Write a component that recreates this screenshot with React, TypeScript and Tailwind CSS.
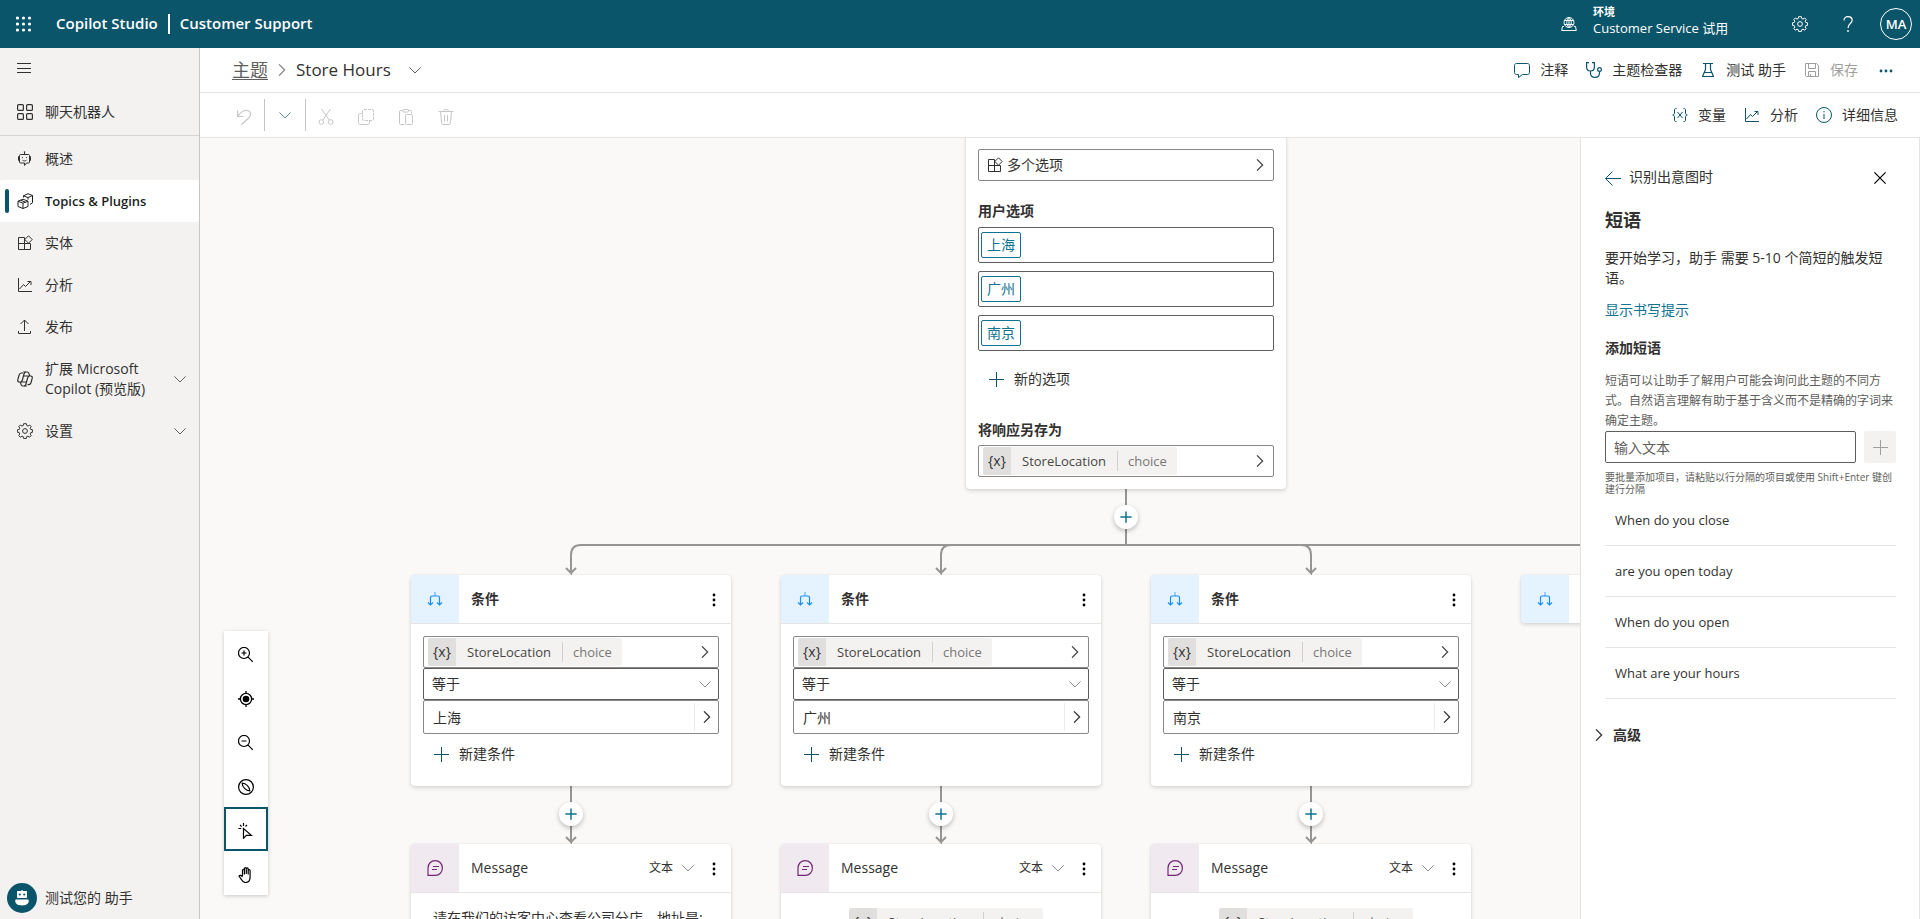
import { ReactNode } from 'react';

interface IconProps {
  className?: string;
  size?: number;
}

function Icon({ size = 16, className = '', children }: IconProps & { children: ReactNode }) {
  return (
    <svg
      width={size}
      height={size}
      viewBox="0 0 16 16"
      fill="none"
      stroke="currentColor"
      strokeWidth="1"
      className={`shrink-0 ${className}`}
      aria-hidden="true"
    >
      {children}
    </svg>
  );
}

const ChevronDown = ({ className }: IconProps) => (
  <Icon size={12} className={className}>
    <path d="M.5 4.5 8 12l7.500-7.500" strokeWidth="1.300" />
  </Icon>
);

const ChevronRight = ({ className }: IconProps) => (
  <Icon size={12} className={className}>
    <path d="M4 .5 11.500 8 4 15.500" strokeWidth="1.700" />
  </Icon>
);

const Plus = ({ className, size }: IconProps) => (
  <Icon size={size} className={className}>
    <path d="M8.500 1v15M1 8.500h15" />
  </Icon>
);

const Waffle = () => (
  <Icon>
    {[1.5, 7.5, 13.5].map((y) =>
      [1.5, 7.5, 13.5].map((x) => (
        <circle key={`${x}-${y}`} cx={x} cy={y + 0.5} r="1.600" fill="currentColor" stroke="none" />
      )),
    )}
  </Icon>
);

const Gear = () => (
  <Icon>
    <circle cx="8" cy="8" r="2.400" />
    <path
      strokeLinejoin="round"
      d="M6.600.7h2.800l.4 1.900 1.200.5L12.700 2l1.500 1.500-1 1.700.5 1.200 1.700.3v2.700l-1.700.3-.5 1.200 1 1.700-1.500 1.600-1.700-1.100-1.200.5-.4 1.800H6.600l-.4-1.800-1.200-.5-1.700 1.100-1.500-1.600 1-1.700-.5-1.200L.600 9.400V6.700l1.700-.3.5-1.200-1-1.700L3.300 2 5 3.100l1.200-.5z"
    />
  </Icon>
);

const Grid = () => (
  <Icon>
    <g strokeWidth="1.200">
      <rect x=".6" y=".6" width="5.800" height="5.800" rx="1" />
      <rect x="9.600" y=".6" width="5.800" height="5.800" rx="1" />
      <rect x=".6" y="9.600" width="5.800" height="5.800" rx="1" />
      <rect x="9.600" y="9.600" width="5.800" height="5.800" rx="1" />
    </g>
  </Icon>
);

const Bot = () => (
  <Icon>
    <path d="M7.500 1v2.500M3.500 3.500h8c.6 0 1 .4 1 1v6.500c0 .6-.4 1-1 1h-2L7.500 14.500V12h-4c-.6 0-1-.4-1-1V4.500c0-.6.400-1 1-1zM2.500 5.500H1.500v4h1M12.500 5.500h1v4h-1M5.500 9.200c1.100.9 2.900.9 4 0" />
    <circle cx="5.500" cy="6.500" r=".6" fill="currentColor" stroke="none" />
    <circle cx="9.500" cy="6.500" r=".6" fill="currentColor" stroke="none" />
    <circle cx="7.500" cy="1" r=".8" fill="currentColor" stroke="none" />
  </Icon>
);

const Topics = () => (
  <Icon>
    <path
      strokeLinejoin="round"
      d="M6 6.200 11 8.200v5.300L6 15.500l-5-2V8.200zM1 8.200l5 2 5-2M6 10.200v5.300M3.500 7.200l5 2M6.500 4.500V2.800L11 .7l4.500 1.800v7.300L13 11.500M6.500 2.800l4.500 1.800 4.500-2.100M11 4.600v2"
    />
  </Icon>
);

const Entities = ({ className }: IconProps) => (
  <Icon className={className}>
    <path d="M7.500 2.500h-6v12h12v-6M1.500 8.500h12M7.500 2.500v12M11.500.800l3.700 3.700-3.700 3.700-3.700-3.700z" />
  </Icon>
);

const Analytics = () => (
  <Icon>
    <path d="M1.500 1v13.500H15M2.500 12 6.500 7.500l2 2 5-5M10.500 4.500h3.500V8" />
  </Icon>
);

const Publish = () => (
  <Icon>
    <path d="M1.500 12v2.500h12V12M7.500 12V1M3.500 5l4-4 4 4" />
  </Icon>
);

const CopilotMark = () => (
  <Icon>
    <g strokeWidth="1.200" strokeLinejoin="round">
      <path d="M6.200 1h4.200c1 0 1.300.6 1.600 1.600l.4 1.400c.2.700.6 1 1.300 1 1.200 0 1.800.9 1.500 2.200l-1.100 4.300c-.4 1.400-1.100 2.100-2.400 2.100H10.500" />
      <path d="M9.800 15H5.600c-1 0-1.300-.6-1.600-1.600L3.600 12c-.2-.7-.6-1-1.300-1C1.100 11 .5 10.100.8 8.800l1.100-4.300C2.300 3.100 3 2 4.500 2h1.700" />
      <path d="M9 1C7.800 1 7.300 1.800 7 3L5.400 9c-.3 1.300-1 2-2.200 2M7 15c1.200 0 1.700-.8 2-2l1.600-6c.3-1.300 1-2 2.200-2M6.500 5h6M3.500 11h6" />
    </g>
  </Icon>
);

const Environment = () => (
  <Icon>
    <circle cx="8" cy="6.500" r="5" />
    <path d="M8 1.500c-3 2.500-3 7.500 0 10M8 1.500c3 2.500 3 7.500 0 10M3.500 4.500h9M3.300 8.500h9.400M8 1.500v10M3 10.500H1.500L.7 14.500h14.600l-.8-4H13" />
  </Icon>
);

const Help = () => (
  <Icon>
    <path strokeWidth="1.200" d="M4 4.500C4 2 5.600.7 8 .7s4.200 1.400 4.200 3.600c0 3.200-4.200 3.400-4.200 7.700" />
    <circle cx="8" cy="15" r=".9" fill="currentColor" stroke="none" />
  </Icon>
);

const Comment = () => (
  <Icon>
    <path strokeLinejoin="round" d="M2.500 1.500h11c1.200 0 2 .8 2 2v7c0 1.200-.8 2-2 2h-5L4.500 15.500v-3h-2c-1.200 0-2-.8-2-2v-7c0-1.200.8-2 2-2z" />
  </Icon>
);

const Stethoscope = () => (
  <Icon>
    <path strokeWidth="1.200" d="M3 .6H.6V5c0 2.500 1.500 4 3.900 4s3.900-1.500 3.900-4V.6H6M4.500 9v2c0 2.800 1.700 4.400 4.400 4.400s4.600-1.600 4.600-4.400V9.400" />
    <circle cx="13.500" cy="7.500" r="1.900" strokeWidth="1.200" />
  </Icon>
);

const Flask = () => (
  <Icon>
    <path strokeLinejoin="round" d="M3 1.500h10M5.500 1.500v6l-3 7h11l-3-7v-6M4 10.500h8" strokeWidth="1.200" />
  </Icon>
);

const Save = () => (
  <Icon>
    <path d="M1.500 1.500h11l2 2v11h-12l-1-1zM4.500 1.500v5h7v-5M4.500 14.500v-5h7v5M6.500 12v2.500" />
  </Icon>
);

const More = () => (
  <Icon>
    {[3, 8, 13].map((x) => (
      <circle key={x} cx={x} cy="9" r="1.400" fill="currentColor" stroke="none" />
    ))}
  </Icon>
);

const Kebab = () => (
  <Icon className="text-black">
    {[3, 8, 13].map((y) => (
      <circle key={y} cx="8" cy={y + 1} r="1.400" fill="currentColor" stroke="none" />
    ))}
  </Icon>
);

const Undo = () => (
  <Icon>
    <path strokeWidth="1.200" d="M1.500 1.500v6h6M1.800 7.200C4.500 3.500 7.500 1.500 10.300 1.500c2.600 0 4.200 1.700 4.200 3.800 0 1.600-.8 2.700-2 3.900L5 16" />
  </Icon>
);

const Cut = () => (
  <Icon>
    <circle cx="3.300" cy="13" r="2.300" />
    <circle cx="12.700" cy="13" r="2.300" />
    <path d="M3.500 0 11.300 11.200M12.500 0 4.700 11.200" />
  </Icon>
);

const Copy = () => (
  <Icon>
    <rect x="4.500" y=".5" width="11" height="11" rx="1.500" strokeDasharray="3 1" />
    <path d="M4.500 4.500h-2c-1.200 0-2 .8-2 2v7c0 1.200.8 2 2 2h7c1.200 0 2-.8 2-2v-2" />
  </Icon>
);

const Paste = () => (
  <Icon>
    <path d="M6.500 15.500h-4c-.600 0-1-.4-1-1v-12c0-.6.400-1 1-1h2.500M10.500 1.500h2c.6 0 1 .4 1 1v2" />
    <rect x="5" y=".5" width="5.500" height="2.500" rx=".8" />
    <rect x="7.500" y="5.500" width="7" height="10" rx="1" />
  </Icon>
);

const Trash = () => (
  <Icon>
    <path d="M.5 2.500h15M5.500 2.500c0-1.400 1-2.200 2.500-2.200s2.500.8 2.500 2.200M2.500 2.500l1.200 12c.1.600.4 1 1 1h6.600c.6 0 .9-.4 1-1l1.200-12M6.500 6v6.500M9.500 6v6.500" />
  </Icon>
);

const Variable = () => (
  <Icon>
    <path d="M4.500 1.500H3.800C3 1.500 2.500 2 2.500 3v3c0 1-.5 2-1.800 2 1.300 0 1.800 1 1.800 2v3c0 1 .5 1.500 1.300 1.500h.7M11.500 1.500h.7c.8 0 1.300.5 1.300 1.500v3c0 1 .5 2 1.800 2-1.300 0-1.800 1-1.800 2v3c0 1-.5 1.500-1.300 1.500h-.7M5.500 5l5 6M10.500 5l-5 6" />
  </Icon>
);

const Info = () => (
  <Icon>
    <circle cx="8" cy="8" r="7.500" />
    <path d="M8 7v5" />
    <circle cx="8" cy="4.800" r=".7" fill="currentColor" stroke="none" />
  </Icon>
);

const Branch = () => (
  <Icon className="text-[#1890ff]">
    <path d="M8 1v4" stroke="#7cc0ff" strokeWidth="1.500" />
    <path d="M3.500 14V6.500c0-1 .5-1.500 1.500-1.500h6c1 0 1.500.5 1.500 1.500V14M1 11.500 3.500 14 6 11.500M10 11.500l2.500 2.500 2.500-2.500" strokeWidth="1.200" />
  </Icon>
);

const Message = () => (
  <Icon className="text-[#742774]">
    <path strokeWidth="1.200" d="M1 15.300V8C1 3.700 4 .7 8.200.7s7.200 3.100 7.200 7.300-3 7.300-7.200 7.300zM6 6.500h6M5 9.500h5" />
  </Icon>
);

const canvasTools: { label: string; icon: ReactNode }[] = [
  {
    label: '放大',
    icon: <path d="m9.800 9.800 5 5M6 3.500v5M3.500 6h5M11.500 6A5.500 5.500 0 1 1 .5 6a5.500 5.500 0 0 1 11 0z" strokeWidth="1.200" />,
  },
  {
    label: '居中',
    icon: (
      <>
        <circle cx="8" cy="8" r="5.600" strokeWidth="1.300" />
        <circle cx="8" cy="8" r="3.300" fill="currentColor" stroke="none" />
        <path d="M8 0v2.500M8 13.500V16M0 8h2.500M13.500 8H16" strokeWidth="1.300" />
      </>
    ),
  },
  {
    label: '缩小',
    icon: <path d="m9.800 9.800 5 5M3.500 6h5M11.500 6A5.500 5.500 0 1 1 .5 6a5.500 5.500 0 0 1 11 0z" strokeWidth="1.200" />,
  },
  {
    label: '小地图',
    icon: (
      <>
        <circle cx="8" cy="8" r="7.400" strokeWidth="1.200" />
        <path d="M4.200 4.200C8 4.200 11.800 8 11.800 11.800 8 11.800 4.200 8 4.200 4.200z" strokeWidth="1.200" />
      </>
    ),
  },
  {
    label: '选择',
    icon: <path d="M5.500 5.500v9.800l2.900-2.900h5z M5.500 0v3M.3 5.500h3M2 2l1.600 1.600M9 1.800 7.500 3.500" strokeWidth="1.200" />,
  },
  {
    label: '平移',
    icon: (
      <path
        strokeWidth="1.200"
        strokeLinejoin="round"
        d="M4.500 9V3.200c0-1.300 1.900-1.300 1.900 0V7.500M6.400 7V1.600c0-1.300 1.900-1.300 1.900 0V7M8.300 7V1.900c0-1.300 1.900-1.300 1.900 0V7.500M10.200 7.500V3.600c0-1.300 1.900-1.300 1.900 0V10c0 3.500-1.600 5.500-4.500 5.500-2.100 0-3-1-4-2.700L1 9c.9-1.100 2.300-.8 3.500 1"
      />
    ),
  },
];

const navItems = [
  { label: '概述', icon: <Bot /> },
  { label: 'Topics & Plugins', icon: <Topics />, active: true },
  { label: '实体', icon: <Entities /> },
  { label: '分析', icon: <Analytics /> },
  { label: '发布', icon: <Publish /> },
  { label: '扩展 Microsoft Copilot (预览版)', icon: <CopilotMark />, expandable: true },
  { label: '设置', icon: <Gear />, expandable: true },
];

const phrases = ['When do you close', 'are you open today', 'When do you open', 'What are your hours'];

const branches = [
  { city: '上海', left: 211 },
  { city: '广州', left: 581 },
  { city: '南京', left: 951 },
];

function Header() {
  return (
    <header className="flex h-12 shrink-0 items-center bg-[#0b556a] pl-4 pr-2 text-white">
      <button aria-label="应用启动器"><Waffle /></button>
      <h1 className="ml-6 text-[15px] font-semibold">Copilot Studio</h1>
      <span className="mx-[10px] h-5 w-0.5 bg-white" />
      <span className="text-[15px] font-semibold">Customer Support</span>
      <button className="ml-auto flex items-center gap-4 text-left">
        <Environment />
        <span className="block w-[199px] pb-2">
          <span className="block text-[11px] leading-4 font-semibold">环境</span>
          <span className="block text-[13px] leading-4">Customer Service 试用</span>
        </span>
      </button>
      <button aria-label="设置"><Gear /></button>
      <button aria-label="帮助" className="ml-8"><Help /></button>
      <button className="ml-6 h-8 w-8 rounded-full border border-white text-[13px] font-semibold">MA</button>
    </header>
  );
}

function Sidebar() {
  return (
    <nav className="flex w-[200px] shrink-0 flex-col border-r border-[#c8c6c4] bg-[#f3f2f1]">
      <button aria-label="折叠导航" className="flex h-10 items-center pl-[17px]">
        <Icon>
          <path d="M0 3.500h14M0 8.500h14M0 12.500h14" />
        </Icon>
      </button>
      <button className="flex h-12 items-center gap-3 border-b border-[#d6d4d2] pl-[17px]">
        <Grid />
        聊天机器人
      </button>
      <div className="mt-0.5">
        {navItems.map((item) => (
          <a
            key={item.label}
            href="#"
            className={`relative flex items-center gap-3 py-[11px] pr-[13px] pl-[17px] leading-5 ${
              item.active ? 'rounded-xs bg-white text-[13px] font-semibold text-[#201f1e]' : ''
            }`}
          >
            {item.active && <span className="absolute top-[9px] left-[5px] h-6 w-1 rounded-xs bg-[#0b556a]" />}
            {item.icon}
            <span className="w-[116px] whitespace-normal">{item.label}</span>
            {item.expandable && <ChevronDown className="ml-auto text-[#605e5c]" />}
          </a>
        ))}
      </div>
      <button className="mt-auto mb-1.5 flex items-center gap-2 pl-[7px]">
        <span className="flex h-[30px] w-[30px] items-center justify-center rounded-full bg-[#0b556a] text-white">
          <Icon>
            <path fill="currentColor" stroke="none" d="M8 0c.5 0 .8.300.8.900H12c.6 0 1 .4 1 1V7c0 .6-.4 1-1 1H4c-.6 0-1-.4-1-1V1.900c0-.6.400-1 1-1h3.200C7.200.300 7.500 0 8 0zM2.500 9.500h11c.8 0 1.300.5 1.300 1.300 0 3-2.600 4.700-6.800 4.700s-6.800-1.700-6.800-4.700c0-.8.500-1.300 1.300-1.300z" />
            <circle cx="5.800" cy="4.500" r="1.100" fill="#0b556a" stroke="none" />
            <circle cx="10.200" cy="4.500" r="1.100" fill="#0b556a" stroke="none" />
          </Icon>
        </span>
        测试您的 助手
      </button>
    </nav>
  );
}

function CommandButton({ icon, label, disabled }: { icon: ReactNode; label: string; disabled?: boolean }) {
  return (
    <button disabled={disabled} className={`flex items-center gap-[10px] ${disabled ? 'text-[#a19f9d]' : ''}`}>
      <span className={disabled ? '' : 'text-[#0b556a]'}>{icon}</span>
      {label}
    </button>
  );
}

function TitleBar() {
  return (
    <div className="flex h-[45px] shrink-0 items-center border-b border-[#e6e4e2] pr-[26px] pl-8">
      <a href="#" className="text-lg text-[#605e5c] underline underline-offset-2">主题</a>
      <ChevronRight className="mx-2 text-[#8a8886]" />
      <h2 className="text-[17px]">Store Hours</h2>
      <button aria-label="切换主题" className="ml-[18px]"><ChevronDown className="text-[#605e5c]" /></button>
      <div className="ml-auto flex items-center gap-[18px]">
        <CommandButton icon={<Comment />} label="注释" />
        <CommandButton icon={<Stethoscope />} label="主题检查器" />
        <CommandButton icon={<Flask />} label="测试 助手" />
        <CommandButton icon={<Save />} label="保存" disabled />
        <button aria-label="更多" className="ml-0.5 text-[#0b556a]"><More /></button>
      </div>
    </div>
  );
}

function Toolbar() {
  return (
    <div className="flex h-[45px] shrink-0 items-center border-b border-[#e6e4e2] pr-[22px] pl-9 text-[#c8c6c4]">
      <button aria-label="撤消" disabled className="pt-1"><Undo /></button>
      <div className="ml-3 flex h-8 w-[42px] items-center justify-center border-x border-[#c8c6c4]">
        <button aria-label="撤消选项"><ChevronDown className="text-[#5c93a3]" /></button>
      </div>
      <div className="ml-3 flex gap-6 pt-1">
        <button aria-label="剪切" disabled><Cut /></button>
        <button aria-label="复制" disabled><Copy /></button>
        <button aria-label="粘贴" disabled><Paste /></button>
        <button aria-label="删除" disabled><Trash /></button>
      </div>
      <div className="ml-auto flex items-center gap-[18px] text-[#323130]">
        <CommandButton icon={<Variable />} label="变量" />
        <CommandButton icon={<Analytics />} label="分析" />
        <CommandButton icon={<Info />} label="详细信息" />
      </div>
    </div>
  );
}

function VariableChip() {
  return (
    <span className="inline-flex h-7 items-center rounded-xs bg-[#f3f2f1] text-[13px]">
      <span className="flex h-7 w-7 items-center justify-center rounded-l-xs bg-[#e1dfdd] text-sm text-[#323130]">{'{x}'}</span>
      <span className="px-[11px] text-[#484644]">StoreLocation</span>
      <span className="h-5 border-l border-[#d2d0ce]" />
      <span className="px-[10px] text-[#797775]">choice</span>
    </span>
  );
}

function VariableField() {
  return (
    <button className="flex h-8 w-full items-center rounded-xs border border-[#8a8886] pr-[7px] pl-1">
      <VariableChip />
      <ChevronRight className="ml-auto text-[#484644]" />
    </button>
  );
}

function AddNode({ left, top }: { left: number; top: number }) {
  return (
    <button
      aria-label="添加节点"
      style={{ left, top }}
      className="absolute flex h-6 w-6 items-center justify-center rounded-full bg-white text-[#0f7391] shadow-[0_2px_5px_rgba(0,0,0,0.25)]"
    >
      <Icon size={12}>
        <path d="M8 .5v15M.5 8h15" strokeWidth="2" />
      </Icon>
    </button>
  );
}

const nodeShadow = 'shadow-[0_2px_4px_rgba(0,0,0,0.13),0_0_2px_rgba(0,0,0,0.1)]';

function QuestionNode() {
  return (
    <section style={{ left: 766, top: -9 }} className={`absolute w-80 rounded-sm bg-white px-3 pt-5 pb-3 ${nodeShadow}`}>
      <button className="flex h-8 w-full items-center gap-1 rounded-xs border border-[#8a8886] pr-[7px] pl-2">
        <Entities />
        多个选项
        <ChevronRight className="ml-auto text-[#484644]" />
      </button>
      <h3 className="mt-5 mb-[6px] leading-5 font-semibold">用户选项</h3>
      <div className="flex flex-col gap-2">
        {branches.map(({ city }) => (
          <div key={city} className="flex h-9 items-center rounded-xs border border-[#605e5c] px-0.5">
            <span className="flex h-[26px] items-center rounded-xs border border-[#0f7391] px-[5px] text-[#0f7391]">{city}</span>
          </div>
        ))}
      </div>
      <button className="mt-[18px] flex items-center gap-[10px] pl-[10px] leading-5">
        <Plus className="text-[#0b556a]" />
        新的选项
      </button>
      <h3 className="mt-[31px] mb-[5px] leading-5 font-semibold">将响应另存为</h3>
      <VariableField />
    </section>
  );
}

function NodeHeader({ kind }: { kind: 'condition' | 'message' }) {
  const isMessage = kind === 'message';
  return (
    <div className="flex h-[49px] items-center border-b border-[#e6e4e2] pr-[9px]">
      <span
        className={`flex h-12 w-12 items-center justify-center rounded-tl-sm ${isMessage ? 'bg-[#f0e9ef]' : 'bg-[#e5f2ff]'}`}
      >
        {isMessage ? <Message /> : <Branch />}
      </span>
      <h3 className={`ml-3 flex-1 ${isMessage ? 'font-medium' : 'font-semibold'}`}>{isMessage ? 'Message' : '条件'}</h3>
      {isMessage && (
        <label className="relative mr-3 flex items-center">
          <select aria-label="消息类型" className="w-[45px] appearance-none bg-transparent text-xs outline-none">
            <option>文本</option>
          </select>
          <ChevronDown className="pointer-events-none absolute right-0 text-[#8a8886]" />
        </label>
      )}
      <button aria-label="节点菜单"><Kebab /></button>
    </div>
  );
}

function ConditionNode({ city, left }: { city: string; left: number }) {
  return (
    <section style={{ left, top: 437 }} className={`absolute w-80 rounded-sm bg-white ${nodeShadow}`}>
      <NodeHeader kind="condition" />
      <div className="px-3 pt-3 pb-[22px]">
        <VariableField />
        <div className="relative flex h-8 items-center rounded-xs border border-[#605e5c]">
          <select aria-label="运算符" className="h-full w-full appearance-none bg-transparent px-2 outline-none">
            <option>等于</option>
          </select>
          <ChevronDown className="pointer-events-none absolute right-[7px] text-[#8a8886]" />
        </div>
        <div className="flex h-[34px] items-center rounded-xs border border-[#8a8886]">
          <input aria-label="值" defaultValue={city} className="h-full min-w-0 flex-1 px-[9px] outline-none" />
          <button aria-label="选择值" className="flex h-7 w-6 items-center justify-center border-l border-[#edebe9]">
            <ChevronRight />
          </button>
        </div>
        <button className="mt-[10px] flex items-center gap-[10px] pl-[10px] leading-5">
          <Plus className="text-[#0b556a]" />
          新建条件
        </button>
      </div>
    </section>
  );
}

function MessageNode({ left, children }: { left: number; children: ReactNode }) {
  return (
    <section style={{ left, top: 706 }} className={`absolute h-40 w-80 rounded-sm bg-white ${nodeShadow}`}>
      <NodeHeader kind="message" />
      <div className="px-3 pt-[15px]">{children}</div>
    </section>
  );
}

function Connectors() {
  const arrow = 'l-5-5m5 5 5-5';
  return (
    <svg className="absolute inset-0 h-full w-full" fill="none" stroke="#979593" strokeWidth="2" aria-hidden="true">
      <path d="M926 351v56" />
      <path d={`M2000 407H381q-10 0-10 10v18${arrow}`} />
      <path d={`M751 407q-10 0-10 10v18${arrow}`} />
      <path d={`M1101 407q10 0 10 10v18${arrow}`} />
      {branches.map(({ left }) => (
        <path key={left} d={`M${left + 160} 648v56${arrow}`} />
      ))}
    </svg>
  );
}

function Canvas() {
  return (
    <main className="relative min-w-0 flex-1 overflow-hidden bg-[#faf9f8]">
      <Connectors />
      <QuestionNode />
      <AddNode left={914} top={367} />
      {branches.map((branch) => (
        <ConditionNode key={branch.city} {...branch} />
      ))}
      {branches.map(({ left }) => (
        <AddNode key={left} left={left + 148} top={664} />
      ))}
      <section style={{ left: 1321, top: 437 }} className={`absolute flex h-12 w-80 items-center rounded-sm bg-white ${nodeShadow}`}>
        <span className="flex h-12 w-12 items-center justify-center rounded-l-sm bg-[#e5f2ff]"><Branch /></span>
      </section>
      <MessageNode left={211}>
        <p className="px-[10px] leading-5">请在我们的访客中心查看公司分店，地址是:</p>
      </MessageNode>
      <MessageNode left={581}>
        <div className="pl-14"><VariableChip /></div>
      </MessageNode>
      <MessageNode left={951}>
        <div className="pl-14"><VariableChip /></div>
      </MessageNode>
      <div className="absolute bottom-6 left-6 flex flex-col bg-white text-black shadow-[0_1px_4px_rgba(0,0,0,0.2)]">
        {canvasTools.map((tool, index) => (
          <button
            key={tool.label}
            aria-label={tool.label}
            className={`flex h-11 w-11 items-center justify-center border-2 pt-1 ${
              index === 4 ? 'border-[#0b556a]' : 'border-transparent'
            }`}
          >
            <Icon>{tool.icon}</Icon>
          </button>
        ))}
      </div>
    </main>
  );
}

function PhrasesPanel() {
  return (
    <aside className="w-[340px] shrink-0 border-x border-[#e6e4e2] bg-white pt-7 pr-[23px] pl-6">
      <div className="flex h-6 items-center">
        <button className="flex items-center gap-2">
          <Icon className="text-[#0b556a]">
            <path d="M16 8.500H1M7.500 1.500l-7 7 7 7" />
          </Icon>
          <span className="pb-0.5">识别出意图时</span>
        </button>
        <button aria-label="关闭" className="ml-auto pr-[10px] text-black">
          <Icon size={12}>
            <path d="m.5.5 15 15M15.500.5l-15 15" strokeWidth="1.600" />
          </Icon>
        </button>
      </div>
      <h2 className="mt-[18px] text-lg leading-6 font-semibold">短语</h2>
      <p className="mt-4 leading-5">要开始学习，助手 需要 5-10 个简短的触发短语。</p>
      <a href="#" className="mt-3 block leading-5 text-[#0f7391]">显示书写提示</a>
      <label htmlFor="phrase" className="mt-[18px] block leading-5 font-semibold">添加短语</label>
      <p className="mt-[13px] text-xs leading-5 text-[#605e5c]">
        短语可以让助手了解用户可能会询问此主题的不同方式。自然语言理解有助于基于含义而不是精确的字词来确定主题。
      </p>
      <div className="flex gap-2">
        <input
          id="phrase"
          placeholder="输入文本"
          className="h-8 min-w-0 flex-1 rounded-xs border border-[#605e5c] px-2 placeholder:text-[#605e5c]"
        />
        <button aria-label="添加" disabled className="flex h-8 w-8 items-center justify-center rounded-xs bg-[#f3f2f1] text-[#a19f9d]">
          <Plus />
        </button>
      </div>
      <p className="mt-2 text-[10px] leading-3 text-[#605e5c]">
        要批量添加项目，请粘贴以行分隔的项目或使用 Shift+Enter 键创建行分隔
      </p>
      <ul>
        {phrases.map((phrase) => (
          <li key={phrase} className="flex h-[51px] items-center border-b border-[#e6e4e2] px-[10px] text-[13px]">
            {phrase}
          </li>
        ))}
      </ul>
      <button className="-ml-3 mt-[26px] flex items-center gap-2 leading-5 font-semibold">
        <ChevronRight />
        高级
      </button>
    </aside>
  );
}

export default function App() {
  return (
    <div className="flex h-screen flex-col overflow-hidden bg-white font-['Open_Sans','Noto_Sans_CJK_SC',sans-serif] text-sm whitespace-nowrap text-[#323130] [&_p]:whitespace-normal">
      <Header />
      <div className="flex min-h-0 flex-1">
        <Sidebar />
        <div className="flex min-w-0 flex-1 flex-col">
          <TitleBar />
          <Toolbar />
          <div className="flex min-h-0 flex-1">
            <Canvas />
            <PhrasesPanel />
          </div>
        </div>
      </div>
    </div>
  );
}
